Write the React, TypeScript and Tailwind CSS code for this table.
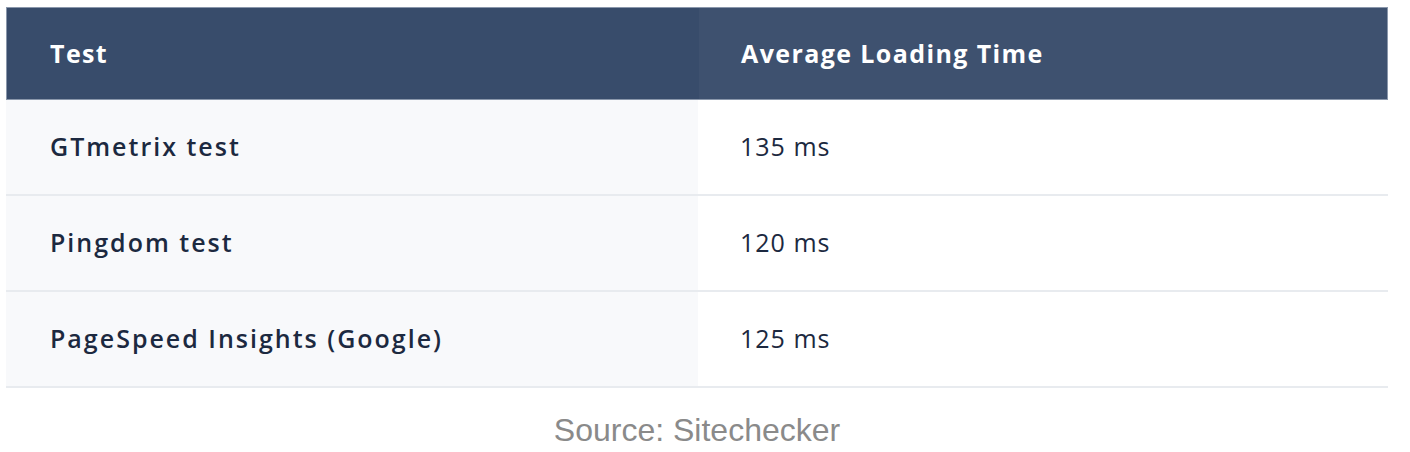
const rows = [
  { test: "GTmetrix test", time: "135 ms" },
  { test: "Pingdom test", time: "120 ms" },
  { test: "PageSpeed Insights (Google)", time: "125 ms" },
]

export default function App() {
  return (
    <div className="h-[452px] w-[1410px] bg-white pt-[7px] pl-[6px] font-['Open_Sans',sans-serif]">
      <div className="w-[1382px]">
        {/* Header */}
        <div className="grid h-[93px] grid-cols-[692px_1fr] border border-[#8a97ab] text-[25px] font-bold tracking-[1.4px] text-white">
          <div className="flex items-center bg-[#384c6b] pl-[43px]">Test</div>
          <div className="flex items-center bg-[#3e516f] pl-[42px]">Average Loading Time</div>
        </div>

        {/* Body */}
        {rows.map(row => (
          <div
            key={row.test}
            className="grid h-[96px] grid-cols-[692px_1fr] border-b-2 border-[#e8ebef] text-[25px] text-[#1c2940]"
          >
            <div className="flex items-center bg-[#f8f9fb] pl-[44px] font-semibold tracking-[2px]">
              {row.test}
            </div>
            <div className="flex items-center bg-white pl-[42px] tracking-[1px]">{row.time}</div>
          </div>
        ))}
      </div>

      <div className="mt-[23px] w-[1382px] text-center font-['Liberation_Sans',Arial,sans-serif] text-[32px] leading-[38px] text-[#8a8a8a]">
        Source: Sitechecker
      </div>
    </div>
  )
}
